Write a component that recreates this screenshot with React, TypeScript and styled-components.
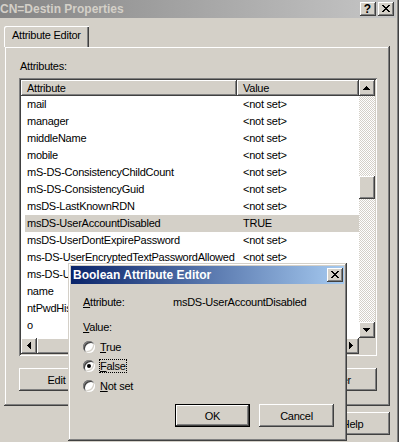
import React from "react";
import styled, { createGlobalStyle, css } from "styled-components";

const FACE = "#d4d0c8";
const SHADOW = "#808080";
const DARK = "#404040";
const HILITE = "#ffffff";

const raised = css`
  box-shadow: inset -1px -1px ${DARK}, inset 1px 1px ${HILITE}, inset -2px -2px ${SHADOW}, inset 2px 2px ${FACE};
`;
const sunken = css`
  box-shadow: inset 1px 1px ${SHADOW}, inset -1px -1px ${HILITE}, inset 2px 2px ${DARK}, inset -2px -2px ${FACE};
`;
const frame = css`
  box-shadow: inset -1px -1px ${DARK}, inset 1px 1px ${FACE}, inset -2px -2px ${SHADOW}, inset 2px 2px ${HILITE};
`;
const checker = css`
  background-color: #fff;
  background-image: conic-gradient(${FACE} 25%, #fff 0 50%, ${FACE} 0 75%, #fff 0);
  background-size: 2px 2px;
`;

const GlobalStyle = createGlobalStyle`
  html, body { margin: 0; padding: 0; background: ${FACE}; }
  body {
    font-family: "Liberation Sans", Arial, sans-serif;
    font-size: 11px;
    letter-spacing: -0.25px;
    color: #000;
  }
  * { box-sizing: border-box; }
  u { text-decoration: underline; text-underline-offset: 1px; }
`;

const Screen = styled.div`
  position: relative;
  width: 399px;
  height: 442px;
  overflow: hidden;
  background: ${FACE};
`;

const MainWindow = styled.div`
  display: flex;
  flex-direction: column;
  width: 399px;
  height: 442px;
  box-shadow: inset -1px 0 ${DARK}, inset -2px 0 ${SHADOW};
`;

const TitleBar = styled.div<{ $active?: boolean }>`
  display: flex;
  align-items: center;
  flex: none;
  height: 18px;
  margin-right: ${(p) => (p.$active ? 0 : 3)}px;
  padding: 0 ${(p) => (p.$active ? 1 : 2)}px 0 ${(p) => (p.$active ? 2 : 0)}px;
  background: ${(p) =>
    p.$active
      ? "linear-gradient(90deg, #0a246a, #a6caf0)"
      : "linear-gradient(90deg, #858585, #c6c6c6)"};
  color: ${(p) => (p.$active ? "#fff" : FACE)};
`;

const TitleText = styled.div`
  flex: 1;
  font-weight: bold;
  font-size: 12px;
  letter-spacing: 0;
  line-height: 18px;
  white-space: nowrap;
  overflow: hidden;
`;

const CaptionButtons = styled.div`
  display: flex;
  gap: 2px;
`;

const CaptionButton = styled.div`
  ${raised};
  width: 16px;
  height: 14px;
  background: ${FACE};
  display: flex;
  align-items: center;
  justify-content: center;
  color: #000;
  font-weight: bold;
  font-size: 12px;
  letter-spacing: 0;
  line-height: 14px;
  padding: 0 1px 1px 0;
`;

const Client = styled.div`
  display: flex;
  flex-direction: column;
  flex: 1;
  padding: 8px 9px 0 4px;
`;

const TabStrip = styled.div`
  display: flex;
  position: relative;
  z-index: 1;
  margin-bottom: -1px;
`;

const Tab = styled.div`
  width: 85px;
  height: 21px;
  padding-left: 8px;
  line-height: 19px;
  background: ${FACE};
  border-top-left-radius: 2px;
  box-shadow: inset 1px 1px ${HILITE}, inset -1px 0 ${DARK}, inset -2px 0 ${SHADOW};
  white-space: nowrap;
`;

const TabPanel = styled.div`
  ${frame};
  display: flex;
  flex-direction: column;
  height: 360px;
  padding: 14px 13px 0 15px;
`;

const FieldLabel = styled.div`
  line-height: 13px;
  padding-left: 1px;
`;

const ListBox = styled.div`
  ${sunken};
  margin-top: 5px;
  width: 358px;
  height: 278px;
  padding: 2px;
  background: #fff;
  display: grid;
  grid-template-columns: 1fr 16px;
  grid-template-rows: 1fr 16px;
`;

const ColumnArea = styled.div`
  display: flex;
  flex-direction: column;
  overflow: hidden;
  background: #fff;
`;

const Header = styled.div`
  display: grid;
  grid-template-columns: 216px 1fr;
  flex: none;
  height: 16px;
`;

const HeaderCell = styled.div`
  ${raised};
  background: ${FACE};
  padding-left: 6px;
  line-height: 16px;
  white-space: nowrap;
`;

const Rows = styled.div`
  flex: 1;
  overflow: hidden;
`;

const Row = styled.div<{ $selected?: boolean }>`
  display: grid;
  grid-template-columns: 216px 1fr;
  height: 17px;
  line-height: 17px;
  margin-left: 4px;
  background: ${(p) => (p.$selected ? FACE : "transparent")};
`;

const Cell = styled.div`
  padding-left: 2px;
  white-space: nowrap;
`;

const VScroll = styled.div`
  display: flex;
  flex-direction: column;
`;

const HScroll = styled.div`
  display: flex;
`;

const Track = styled.div<{ $vertical?: boolean }>`
  ${checker};
  flex: 1;
  display: flex;
  flex-direction: ${(p) => (p.$vertical ? "column" : "row")};
  overflow: hidden;
`;

const Thumb = styled.div<{ $offset: number; $length: number; $vertical?: boolean }>`
  ${raised};
  background: ${FACE};
  flex: none;
  ${(p) =>
    p.$vertical
      ? css`
          margin-top: ${p.$offset}px;
          height: ${p.$length}px;
        `
      : css`
          margin-left: ${p.$offset}px;
          width: ${p.$length}px;
        `}
`;

const ArrowButton = styled.div`
  ${raised};
  flex: none;
  width: 16px;
  height: 16px;
  background: ${FACE};
  display: flex;
  align-items: center;
  justify-content: center;
  padding: 0 1px 1px 0;
`;

const Corner = styled.div`
  background: ${FACE};
`;

const ButtonRow = styled.div`
  display: flex;
  justify-content: space-between;
  margin-top: 12px;
`;

const FooterRow = styled.div`
  display: flex;
  justify-content: flex-end;
  gap: 6px;
  margin-top: 6px;
`;

const PushButton = styled.div<{ $default?: boolean }>`
  width: 75px;
  height: 23px;
  background: ${FACE};
  display: flex;
  align-items: center;
  justify-content: center;
  white-space: nowrap;
  ${(p) =>
    p.$default
      ? css`
          box-shadow: inset 0 0 0 1px #000, inset -2px -2px ${DARK}, inset 2px 2px ${HILITE},
            inset -3px -3px ${SHADOW};
        `
      : raised};
`;

const Dialog = styled.div`
  ${frame};
  position: absolute;
  left: 68px;
  top: 263px;
  width: 279px;
  height: 178px;
  padding: 3px;
  background: ${FACE};
  display: flex;
  flex-direction: column;
  z-index: 5;
`;

const DialogBody = styled.div`
  flex: 1;
  display: flex;
  flex-direction: column;
  padding: 11px 10px 11px 12px;
`;

const PropRow = styled.div`
  display: flex;
  height: 14px;
  line-height: 14px;
  white-space: nowrap;
`;

const PropLabel = styled.div`
  width: 90px;
`;

const GroupLabel = styled.div`
  margin-top: 11px;
  line-height: 14px;
`;

const RadioGroup = styled.div`
  margin-top: 3px;
  display: flex;
  flex-direction: column;
`;

const RadioRow = styled.div`
  display: flex;
  align-items: center;
  height: 19.5px;
`;

const RadioCircle = styled.div<{ $checked?: boolean }>`
  position: relative;
  width: 12px;
  height: 12px;
  border-radius: 50%;
  background: #fff;
  box-shadow: inset 1px 1px 0 ${SHADOW}, inset -1px -1px 0 ${HILITE}, inset 2px 2px 0 ${DARK},
    inset -2px -2px 0 ${FACE};
  &::after {
    content: "";
    display: ${(p) => (p.$checked ? "block" : "none")};
    position: absolute;
    left: 4px;
    top: 4px;
    width: 4px;
    height: 4px;
    border-radius: 50%;
    background: #000;
  }
`;

const RadioLabel = styled.div<{ $focused?: boolean }>`
  margin-left: 4px;
  line-height: 12px;
  border: 1px dotted ${(p) => (p.$focused ? "#000" : "transparent")};
  white-space: nowrap;
`;

const DialogButtons = styled.div`
  margin-top: auto;
  display: flex;
  justify-content: flex-end;
  gap: 9px;
`;

const Glyph = ({ d, w, h }: { d: string; w: number; h: number }) => (
  <svg width={w} height={h} viewBox={`0 0 ${w} ${h}`} shapeRendering="crispEdges">
    <path d={d} fill="#000" />
  </svg>
);

const UP = "M3 0h1v1H3z M2 1h3v1H2z M1 2h5v1H1z M0 3h7v1H0z";
const DOWN = "M0 0h7v1H0z M1 1h5v1H1z M2 2h3v1H2z M3 3h1v1H3z";
const LEFT = "M3 0h1v7H3z M2 1h1v5H2z M1 2h1v3H1z M0 3h1v1H0z";
const RIGHT = "M0 0h1v7H0z M1 1h1v5H1z M2 2h1v3H2z M3 3h1v1H3z";
const CLOSE =
  "M0 0h2v1H0z M6 0h2v1H6z M1 1h2v1H1z M5 1h2v1H5z M2 2h4v1H2z M3 3h2v1H3z M2 4h4v1H2z M1 5h2v1H1z M5 5h2v1H5z M0 6h2v1H0z M6 6h2v1H6z";

const attributes: { name: string; value: string; selected?: boolean }[] = [
  { name: "mail", value: "<not set>" },
  { name: "manager", value: "<not set>" },
  { name: "middleName", value: "<not set>" },
  { name: "mobile", value: "<not set>" },
  { name: "mS-DS-ConsistencyChildCount", value: "<not set>" },
  { name: "mS-DS-ConsistencyGuid", value: "<not set>" },
  { name: "msDS-LastKnownRDN", value: "<not set>" },
  { name: "msDS-UserAccountDisabled", value: "TRUE", selected: true },
  { name: "msDS-UserDontExpirePassword", value: "<not set>" },
  { name: "ms-DS-UserEncryptedTextPasswordAllowed", value: "<not set>" },
  { name: "ms-DS-UserPasswordNotRequired", value: "<not set>" },
  { name: "name", value: "Destin" },
  { name: "ntPwdHistory", value: "<not set>" },
  { name: "o", value: "<not set>" },
  { name: "objectCategory", value: "CN=Person" },
];

export default function App() {
  return (
    <Screen>
      <GlobalStyle />
      <MainWindow>
        <TitleBar>
          <TitleText>CN=Destin Properties</TitleText>
          <CaptionButtons>
            <CaptionButton>?</CaptionButton>
            <CaptionButton>
              <Glyph d={CLOSE} w={8} h={7} />
            </CaptionButton>
          </CaptionButtons>
        </TitleBar>
        <Client>
          <TabStrip>
            <Tab>Attribute Editor</Tab>
          </TabStrip>
          <TabPanel>
            <FieldLabel>Attributes:</FieldLabel>
            <ListBox>
              <ColumnArea>
                <Header>
                  <HeaderCell>Attribute</HeaderCell>
                  <HeaderCell>Value</HeaderCell>
                </Header>
                <Rows>
                  {attributes.map((a) => (
                    <Row key={a.name} $selected={a.selected}>
                      <Cell>{a.name}</Cell>
                      <Cell>{a.value}</Cell>
                    </Row>
                  ))}
                </Rows>
              </ColumnArea>
              <VScroll>
                <ArrowButton>
                  <Glyph d={UP} w={7} h={4} />
                </ArrowButton>
                <Track $vertical>
                  <Thumb $vertical $offset={80} $length={23} />
                </Track>
                <ArrowButton>
                  <Glyph d={DOWN} w={7} h={4} />
                </ArrowButton>
              </VScroll>
              <HScroll>
                <ArrowButton>
                  <Glyph d={LEFT} w={4} h={7} />
                </ArrowButton>
                <Track>
                  <Thumb $offset={0} $length={260} />
                </Track>
                <ArrowButton>
                  <Glyph d={RIGHT} w={4} h={7} />
                </ArrowButton>
              </HScroll>
              <Corner />
            </ListBox>
            <ButtonRow>
              <PushButton>Edit</PushButton>
              <PushButton>Filter</PushButton>
            </ButtonRow>
          </TabPanel>
          <FooterRow>
            <PushButton>OK</PushButton>
            <PushButton>Cancel</PushButton>
            <PushButton>Apply</PushButton>
            <PushButton>Help</PushButton>
          </FooterRow>
        </Client>
      </MainWindow>

      <Dialog>
        <TitleBar $active>
          <TitleText>Boolean Attribute Editor</TitleText>
          <CaptionButton>
            <Glyph d={CLOSE} w={8} h={7} />
          </CaptionButton>
        </TitleBar>
        <DialogBody>
          <PropRow>
            <PropLabel>
              <u>A</u>ttribute:
            </PropLabel>
            <div>msDS-UserAccountDisabled</div>
          </PropRow>
          <GroupLabel>
            <u>V</u>alue:
          </GroupLabel>
          <RadioGroup>
            <RadioRow>
              <RadioCircle />
              <RadioLabel>
                <u>T</u>rue
              </RadioLabel>
            </RadioRow>
            <RadioRow>
              <RadioCircle $checked />
              <RadioLabel $focused>
                <u>F</u>alse
              </RadioLabel>
            </RadioRow>
            <RadioRow>
              <RadioCircle />
              <RadioLabel>
                <u>N</u>ot set
              </RadioLabel>
            </RadioRow>
          </RadioGroup>
          <DialogButtons>
            <PushButton $default>OK</PushButton>
            <PushButton>Cancel</PushButton>
          </DialogButtons>
        </DialogBody>
      </Dialog>
    </Screen>
  );
}
